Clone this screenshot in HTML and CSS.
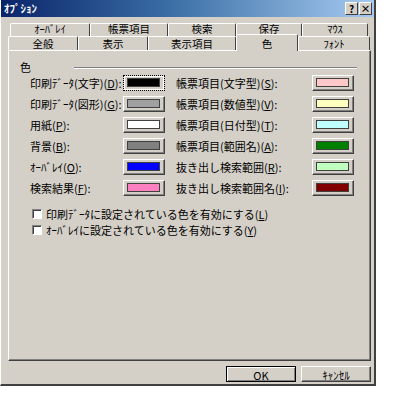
FILE: index.html
```html
<!DOCTYPE html>
<html lang="ja">

<head>
    <meta charset="UTF-8">
    <title>ｵﾌﾟｼｮﾝ</title>
    <link rel="stylesheet" href="styles.css">
</head>

<body>
    <div class="dialog">
        <div class="titlebar">
            <span class="title">ｵﾌﾟｼｮﾝ</span>
            <span class="tbtn">?</span>
            <span class="tbtn">×</span>
        </div>

        <div class="tabs">
            <div class="tabrow back">
                <div class="tab w80">ｵｰﾊﾞﾚｲ</div>
                <div class="tab w78">帳票項目</div>
                <div class="tab w68">検索</div>
                <div class="tab w66">保存</div>
                <div class="tab w66">ﾏｳｽ</div>
            </div>
            <div class="tabrow front">
                <div class="tab w70">全般</div>
                <div class="tab w70">表示</div>
                <div class="tab w88">表示項目</div>
                <div class="tab w62 active">色</div>
                <div class="tab w72">ﾌｫﾝﾄ</div>
            </div>
        </div>

        <div class="panel">
            <div class="group-head">
                <span>色</span>
                <span class="rule"></span>
            </div>

            <div class="colors">
                <span>印刷ﾃﾞｰﾀ(文字)(<u>D</u>):</span>
                <span class="swatch focus"><i class="c-black"></i></span>
                <span>帳票項目(文字型)(<u>S</u>):</span>
                <span class="swatch"><i class="c-pink"></i></span>

                <span>印刷ﾃﾞｰﾀ(図形)(<u>G</u>):</span>
                <span class="swatch"><i class="c-lgray"></i></span>
                <span>帳票項目(数値型)(<u>V</u>):</span>
                <span class="swatch"><i class="c-yellow"></i></span>

                <span>用紙(<u>P</u>):</span>
                <span class="swatch"><i class="c-white"></i></span>
                <span>帳票項目(日付型)(<u>T</u>):</span>
                <span class="swatch"><i class="c-cyan"></i></span>

                <span>背景(<u>B</u>):</span>
                <span class="swatch"><i class="c-gray"></i></span>
                <span>帳票項目(範囲名)(<u>A</u>):</span>
                <span class="swatch"><i class="c-green"></i></span>

                <span>ｵｰﾊﾞﾚｲ(<u>O</u>):</span>
                <span class="swatch"><i class="c-blue"></i></span>
                <span>抜き出し検索範囲(<u>R</u>):</span>
                <span class="swatch"><i class="c-lgreen"></i></span>

                <span>検索結果(<u>F</u>):</span>
                <span class="swatch"><i class="c-hpink"></i></span>
                <span>抜き出し検索範囲名(<u>I</u>):</span>
                <span class="swatch"><i class="c-maroon"></i></span>
            </div>

            <div class="checks">
                <label class="check"><span class="box"></span><span>印刷ﾃﾞｰﾀに設定されている色を有効にする(<u>L</u>)</span></label>
                <label class="check"><span class="box"></span><span>ｵｰﾊﾞﾚｲに設定されている色を有効にする(<u>Y</u>)</span></label>
            </div>
        </div>

        <div class="footer">
            <button class="btn default">OK</button>
            <button class="btn">ｷｬﾝｾﾙ</button>
        </div>
    </div>
</body>

</html>
```

FILE: styles.css
```css
body {
    margin: 0;
    background: #fff;
    font-family: "Noto Sans CJK JP", sans-serif;
    font-size: 11px;
    line-height: 1;
    color: #000;
}

.dialog {
    width: 376px;
    height: 386px;
    box-sizing: border-box;
    background: #d4d0c8;
    border-left: 1px solid #fff;
    border-right: 2px solid #404040;
    border-bottom: 2px solid #404040;
    display: flex;
    flex-direction: column;
}

/* title bar */
.titlebar {
    height: 17px;
    display: flex;
    align-items: center;
    padding: 0 2px 0 3px;
    background: linear-gradient(to right, #0a246a, #3a6ea5 45%, #a6caf0);
    color: #fff;
    font-weight: bold;
}

.title {
    flex: 1;
}

.tbtn {
    width: 11px;
    height: 11px;
    margin-left: 1px;
    background: #d4d0c8;
    border: 1px solid;
    border-color: #fff #404040 #404040 #fff;
    color: #000;
    font-size: 10px;
    display: flex;
    align-items: center;
    justify-content: center;
}

/* tabs */
.tabs {
    margin: 6px 0 0 7px;
}

.tabrow {
    display: flex;
    align-items: flex-start;
}

.tabrow.back {
    margin-left: 2px;
    height: 13px;
}

.tabrow.back .tab {
    padding-bottom: 2px;
}

.tabrow.front {
    height: 14px;
}

.tab {
    box-sizing: border-box;
    height: 100%;
    border: 1px solid;
    border-color: #fff #404040 transparent #fff;
    border-bottom: none;
    border-radius: 2px 2px 0 0;
    display: flex;
    align-items: center;
    justify-content: center;
    background: #d4d0c8;
    font-size: 10.5px;
    line-height: 10px;
}

.tab.active {
    height: 17px;
    margin-top: -2px;
    position: relative;
    z-index: 1;
    align-items: flex-start;
    padding-top: 4px;
}

.w62 { width: 62px; }
.w66 { width: 66px; }
.w68 { width: 68px; }
.w70 { width: 70px; }
.w72 { width: 72px; }
.w78 { width: 78px; }
.w80 { width: 80px; }
.w88 { width: 88px; }

/* panel */
.panel {
    margin-left: 7px;
    width: 363px;
    height: 311px;
    box-sizing: border-box;
    border: 1px solid;
    border-color: #fff #404040 #404040 #fff;
    box-shadow: inset -1px -1px #808080;
    padding: 11px 0 0 11px;
}

.group-head {
    display: flex;
    align-items: center;
}

.rule {
    flex: 1;
    margin: 0 13px 0 43px;
    border-top: 1px solid #808080;
    border-bottom: 1px solid #fff;
}

.colors {
    display: grid;
    grid-template-columns: 93px 53px 136px 42px;
    grid-auto-rows: 16px;
    row-gap: 5px;
    align-items: center;
    margin: 2px 0 0 10px;
}

.swatch {
    width: 42px;
    height: 16px;
    box-sizing: border-box;
    border: 1px solid;
    border-color: #fff #404040 #404040 #fff;
    box-shadow: inset -1px -1px #808080;
    padding: 2px 4px 3px 3px;
}

.swatch.focus {
    border: 1px dotted #000;
    box-shadow: inset 0 0 0 1px #fff;
}

.swatch i {
    display: block;
    height: 100%;
    box-sizing: border-box;
    border: 1px solid #404040;
}

.c-black { background: #000; }
.c-lgray { background: #a0a0a0; }
.c-white { background: #fff; }
.c-gray { background: #808080; }
.c-blue { background: #0000ff; }
.c-hpink { background: #ff80c0; }
.c-pink { background: #ffc8c8; }
.c-yellow { background: #ffffc0; }
.c-cyan { background: #c0ffff; }
.c-green { background: #008000; }
.c-lgreen { background: #c0ffc0; }
.c-maroon { background: #800000; }

/* check boxes */
.checks {
    margin: 10px 0 0 12px;
    display: flex;
    flex-direction: column;
}

.check {
    height: 16px;
    display: flex;
    align-items: center;
    gap: 4px;
}

.box {
    width: 10px;
    height: 10px;
    box-sizing: border-box;
    background: #fff;
    border: 1px solid;
    border-color: #808080 #fff #fff #808080;
    box-shadow: inset 1px 1px #404040;
}

/* buttons */
.footer {
    display: flex;
    justify-content: flex-end;
    gap: 5px;
    margin-top: 5px;
    padding-right: 3px;
}

.btn {
    width: 70px;
    height: 16px;
    padding: 0;
    background: #d4d0c8;
    font-family: inherit;
    font-size: 11px;
    border: 1px solid;
    border-color: #fff #404040 #404040 #fff;
    box-shadow: inset -1px -1px #808080;
}

.btn.default {
    border-color: #000;
    box-shadow: inset 1px 1px #fff, inset -1px -1px #808080;
}
```
